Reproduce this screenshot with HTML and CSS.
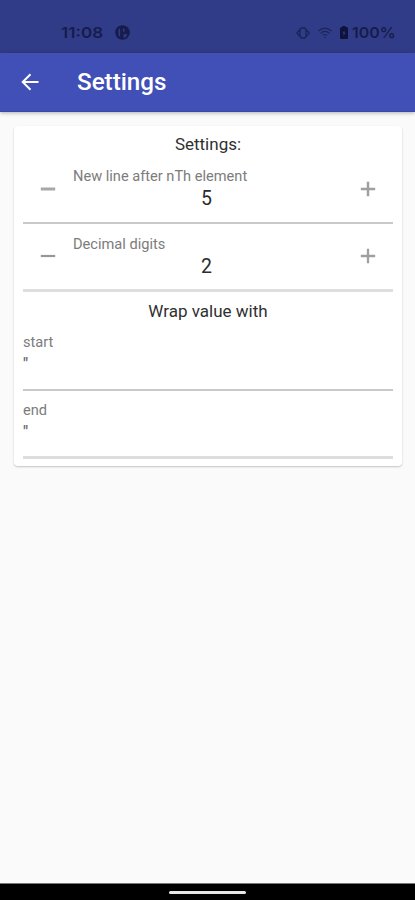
FILE: index.html
```html
<!DOCTYPE html>
<html lang="en">
<head>
<meta charset="utf-8">
<title>Settings</title>
<link rel="stylesheet" href="styles.css">
</head>
<body>
<div class="status">
  <span class="clock">11:08</span>
  <svg class="app-icon" width="15" height="15" viewBox="0 0 15 15"><circle cx="7.500" cy="7.500" r="7.300" fill="#161c4c"/><path d="M3.600 3.800h1.500v7.500H3.600zM8 3.800h1.500v3H8zM8.600 9.200h3.800q-.8 3-3.800 3.800z" fill="#303c87"/></svg>
  <svg class="vibrate" width="14" height="12" viewBox="0 0 14 12" fill="none" stroke="#1c2458" stroke-width="1.300"><path d="M4 3.200Q4 1 6 1h2q2 0 2 2.200v5.600Q10 11 8 11H6Q4 11 4 8.800zM3.400 3L.9 6l2.500 3M10.600 3l2.500 3-2.500 3"/></svg>
  <svg class="wifi" width="14" height="12" viewBox="0 0 14 12" fill="none" stroke="#1c2458" stroke-width="1.100"><path d="M.5 4Q7-1.800 13.500 4M2.600 6.300Q7 2.400 11.400 6.300M4.700 8.400Q7 6.500 9.300 8.400"/><circle cx="7" cy="10.500" r=".8" fill="#1c2458" stroke="none"/></svg>
  <svg class="battery" width="8" height="13" viewBox="0 0 8 13"><path d="M2.300 0h3.400v1.200H7Q8 1.200 8 2.200V12Q8 13 7 13H1Q0 13 0 12V2.200Q0 1.200 1 1.200h1.300z" fill="#0e133e"/><path d="M4.500 4L2.500 7.500h1.300L3.500 10l2-3.500H4.200z" fill="#303c87"/></svg>
  <span class="percent">100%</span>
</div>
<header class="appbar">
  <svg class="back" width="18" height="18" viewBox="0 0 18 18" fill="none" stroke="#fff" stroke-width="2"><path d="M17.500 9H1.800M9.500 1.200L1.700 9l7.800 7.800"/></svg>
  <h1>Settings</h1>
</header>
<main>
  <section class="card">
    <h2>Settings:</h2>
    <div class="field stepper">
      <svg class="icon" width="16" height="16" viewBox="0 0 16 16"><path d="M.8 8h14.400" stroke="#a8a8a8" stroke-width="3"/></svg>
      <div class="body"><div class="label">New line after nTh element</div><div class="number">5</div></div>
      <svg class="icon" width="16" height="16" viewBox="0 0 16 16"><path d="M.8 8h14.400M8 .8v14.400" stroke="#a0a0a0" stroke-width="2.500"/></svg>
    </div>
    <div class="field stepper thick">
      <svg class="icon" width="16" height="16" viewBox="0 0 16 16"><path d="M.8 8h14.400" stroke="#969696" stroke-width="2.200"/></svg>
      <div class="body"><div class="label">Decimal digits</div><div class="number">2</div></div>
      <svg class="icon" width="16" height="16" viewBox="0 0 16 16"><path d="M.8 8h14.400M8 .8v14.400" stroke="#a0a0a0" stroke-width="2.300"/></svg>
    </div>
    <h2 class="wrap-title">Wrap value with</h2>
    <div class="field text"><div class="label">start</div><div class="value">"</div></div>
    <div class="field text thick"><div class="label">end</div><div class="value">"</div></div>
  </section>
</main>
<footer class="navbar"><div class="handle"></div></footer>
</body>
</html>
```
FILE: styles.css
```css
* { box-sizing: border-box; }
body {
  margin: 0;
  height: 900px;
  display: flex;
  flex-direction: column;
  background: #fafafa;
  font-family: Roboto, "Liberation Sans", sans-serif;
  overflow: hidden;
}
.status {
  height: 53px;
  padding: 12px 19px 0 61px;
  display: flex;
  align-items: center;
  background: #303c87;
  color: #161c4c;
  font: 600 15px/20px Inter, sans-serif;
}
.clock {
  width: 42px;
  white-space: nowrap;
  transform: scaleX(1.14);
  transform-origin: left;
}
.app-icon { margin-left: 12px; }
.vibrate { margin-left: auto; }
.wifi { margin-left: 8px; }
.battery { margin-left: 8px; }
.percent {
  margin-left: 4px;
  width: 44px;
  white-space: nowrap;
  transform: scaleX(1.06);
  transform-origin: left;
}
.appbar {
  height: 59px;
  padding-left: 21px;
  display: flex;
  align-items: center;
  background: #4150b7;
  border-bottom: 1px solid #3a48a6;
  box-shadow: 0 1px 4px rgba(0, 0, 0, .3);
  color: #fff;
}
h1 {
  margin: 0 0 0 38px;
  font-size: 24.2px;
  font-weight: 500;
  line-height: 30px;
}
main { flex: 1; padding: 14px 13px 0 14px; }
.card {
  height: 340px;
  padding: 8px 9px 0;
  background: #fff;
  border-radius: 4px;
  box-shadow: 0 1px 2px rgba(0, 0, 0, .22);
}
h2 {
  margin: 0;
  height: 22px;
  font-size: 17px;
  font-weight: 400;
  line-height: 20px;
  text-align: center;
  color: #303030;
}
.wrap-title { margin: 9px 0 0; }
.field {
  height: 68px;
  border-bottom: 2px solid #c9c9c9;
}
.field.thick { border-bottom: 3px solid #dedede; }
.stepper {
  display: flex;
  align-items: center;
  padding: 0 17px;
}
.stepper .icon { margin-bottom: 1px; }
.stepper .body { flex: 1; padding-left: 17px; }
.label {
  font-size: 14.6px;
  line-height: 20px;
  color: #7c7c7c;
}
.number {
  padding-right: 20px;
  font-size: 19.5px;
  line-height: 26px;
  text-align: center;
  color: #2c2c2c;
}
.text { padding-top: 9px; }
.value { font-size: 16px; font-weight: 500; line-height: 24px; color: #666; }
.navbar {
  height: 17px;
  display: flex;
  justify-content: center;
  align-items: center;
  background: #000;
  border-top: 1px solid #777;
}
.handle { width: 77px; height: 3px; border-radius: 2px; background: #e8e8e8; }
```
